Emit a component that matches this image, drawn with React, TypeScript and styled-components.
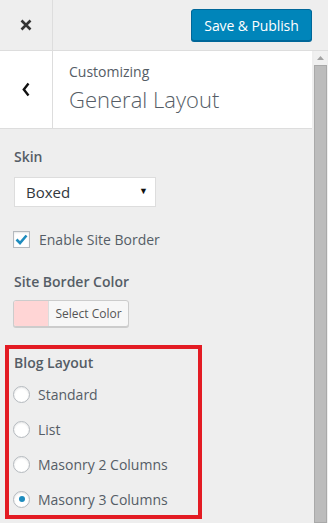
import styled, { createGlobalStyle } from 'styled-components';

const GlobalStyle = createGlobalStyle`
  html, body {
    margin: 0;
    padding: 0;
    background: #eeeeee;
    overflow: hidden;
  }
  * {
    box-sizing: border-box;
  }
`;

const Page = styled.div`
  width: 328px;
  height: 523px;
  display: flex;
  flex-direction: column;
  font-family: "Open Sans", "Segoe UI", sans-serif;
  color: #555d66;
  background: #eeeeee;
`;

const TopBar = styled.header`
  height: 51px;
  flex-shrink: 0;
  display: flex;
  align-items: center;
  border-bottom: 1px solid #dddddd;
  padding-right: 16px;
`;

const CloseBox = styled.div`
  width: 53px;
  height: 50px;
  display: flex;
  align-items: center;
  justify-content: center;
  border-right: 1px solid #dddddd;
  color: #444;
`;

const PublishButton = styled.button`
  margin-left: auto;
  height: 32px;
  width: 121px;
  padding: 0;
  border: 1px solid #006799;
  border-radius: 3px;
  background: #0085ba;
  box-shadow: 0 1px 0 #006799;
  color: #ffffff;
  font-family: inherit;
  font-size: 14px;
  letter-spacing: -0.1px;
`;

const Body = styled.div`
  flex: 1;
  display: flex;
  min-height: 0;
`;

const Panel = styled.div`
  flex: 1;
  display: flex;
  flex-direction: column;
`;

const SectionHeader = styled.div`
  height: 78px;
  display: flex;
  background: #ffffff;
  border-bottom: 1px solid #dddddd;
`;

const BackBox = styled.div`
  width: 53px;
  display: flex;
  align-items: center;
  justify-content: center;
  border-right: 1px solid #dddddd;
  color: #222;
`;

const TitleBlock = styled.div`
  padding: 11px 0 0 16px;
  display: flex;
  flex-direction: column;
`;

const Eyebrow = styled.span`
  font-size: 14px;
  line-height: 20px;
  color: #555d66;
`;

const Title = styled.h1`
  margin: 2px 0 0;
  font-size: 22px;
  line-height: 30px;
  font-weight: 300;
  color: #555d66;
`;

const Content = styled.div`
  padding: 18px 0 0 14px;
  display: flex;
  flex-direction: column;
  align-items: flex-start;
`;

const Label = styled.div<{ $gap?: number }>`
  font-size: 14px;
  line-height: 20px;
  font-weight: 600;
  color: #555d66;
  margin-top: ${({ $gap }) => $gap ?? 0}px;
`;

const Select = styled.div`
  margin-top: 10px;
  width: 142px;
  height: 30px;
  display: flex;
  align-items: center;
  justify-content: space-between;
  padding: 0 7px 0 11px;
  background: #ffffff;
  border: 1px solid #dddddd;
  font-size: 15px;
  color: #32373c;
`;

const Caret = styled.span`
  font-size: 9px;
  color: #111;
  margin-top: -4px;
`;

const CheckRow = styled.label`
  margin-top: 22px;
  height: 20px;
  display: flex;
  align-items: center;
  gap: 9px;
  font-size: 14px;
  color: #555d66;
`;

const CheckBox = styled.span`
  width: 17px;
  height: 17px;
  margin-left: -1px;
  border: 1px solid #b4b9be;
  background: #ffffff;
  box-shadow: inset 0 1px 2px rgba(0, 0, 0, 0.1);
  display: flex;
  align-items: center;
  justify-content: center;
`;

const ColorButton = styled.div`
  margin-top: 8px;
  margin-left: -1px;
  height: 27px;
  width: 116px;
  display: flex;
  border: 1px solid #cccccc;
  border-radius: 3px;
  box-shadow: 0 1px 0 #cccccc;
  overflow: hidden;
  background: #f7f7f7;
`;

const Swatch = styled.span<{ $color: string }>`
  width: 35px;
  background: ${({ $color }) => $color};
  border-right: 1px solid #dddddd;
`;

const SwatchText = styled.span`
  flex: 1;
  display: flex;
  align-items: center;
  justify-content: center;
  font-size: 12px;
  color: #555;
`;

const Highlight = styled.div`
  margin: 18px 0 0 -9px;
  width: 197px;
  border: 4px solid #e31b23;
  padding: 4px 0 6px 5px;
`;

const RadioList = styled.div`
  margin-top: 11px;
  display: flex;
  flex-direction: column;
  gap: 15px;
`;

const RadioRow = styled.label`
  height: 20px;
  display: flex;
  align-items: center;
  gap: 8px;
  font-size: 14px;
  color: #555d66;
`;

const RadioCircle = styled.span<{ $checked?: boolean }>`
  width: 17px;
  height: 17px;
  margin-left: -1px;
  border-radius: 50%;
  border: 1px solid #b4b9be;
  background: #ffffff;
  box-shadow: inset 0 1px 2px rgba(0, 0, 0, 0.1);
  display: flex;
  align-items: center;
  justify-content: center;

  &::after {
    content: '';
    display: ${({ $checked }) => ($checked ? 'block' : 'none')};
    width: 6px;
    height: 6px;
    border-radius: 50%;
    background: #1e8cbe;
  }
`;

const Scrollbar = styled.div`
  width: 13px;
  margin: 0 1px 0 2px;
  display: flex;
  flex-direction: column;
  background: #f0f0f0;
`;

const ScrollArrow = styled.div`
  height: 14px;
  display: flex;
  align-items: center;
  justify-content: center;
`;

const ScrollThumb = styled.div`
  flex: 1;
  background: #bcbcbc;
  border: 1px solid #a9a9a9;
`;

const layouts = ['Standard', 'List', 'Masonry 2 Columns', 'Masonry 3 Columns'];

function App(): JSX.Element {
  return (
    <Page>
      <GlobalStyle />
      <TopBar>
        <CloseBox>
          <svg width="12" height="12" viewBox="0 0 12 12">
            <path d="M1.5 1.5 L10.5 10.5 M10.5 1.5 L1.5 10.5" stroke="#333" strokeWidth="2.6" />
          </svg>
        </CloseBox>
        <PublishButton>Save &amp; Publish</PublishButton>
      </TopBar>
      <Body>
        <Panel>
          <SectionHeader>
            <BackBox>
              <svg width="8" height="15" viewBox="0 0 8 15">
                <path d="M6.5 1.5 L1.8 7.5 L6.5 13.5" stroke="#111" strokeWidth="2.4" fill="none" />
              </svg>
            </BackBox>
            <TitleBlock>
              <Eyebrow>Customizing</Eyebrow>
              <Title>General Layout</Title>
            </TitleBlock>
          </SectionHeader>
          <Content>
            <Label>Skin</Label>
            <Select>
              Boxed
              <Caret>▼</Caret>
            </Select>
            <CheckRow>
              <CheckBox>
                <svg width="13" height="11" viewBox="0 0 13 11">
                  <path d="M1.5 5.5 L5 9 L11.5 1.5" stroke="#1e8cbe" strokeWidth="2.6" fill="none" />
                </svg>
              </CheckBox>
              Enable Site Border
            </CheckRow>
            <Label $gap={23}>Site Border Color</Label>
            <ColorButton>
              <Swatch $color="#ffd5d5" />
              <SwatchText>Select Color</SwatchText>
            </ColorButton>
            <Highlight>
              <Label>Blog Layout</Label>
              <RadioList>
                {layouts.map((item, i) => (
                  <RadioRow key={item}>
                    <RadioCircle $checked={i === layouts.length - 1} />
                    {item}
                  </RadioRow>
                ))}
              </RadioList>
            </Highlight>
          </Content>
        </Panel>
        <Scrollbar>
          <ScrollArrow>
            <svg width="7" height="4" viewBox="0 0 7 4">
              <path d="M0 4 L3.5 0 L7 4 Z" fill="#a3a3a3" />
            </svg>
          </ScrollArrow>
          <ScrollThumb />
        </Scrollbar>
      </Body>
    </Page>
  );
}

export default App;
